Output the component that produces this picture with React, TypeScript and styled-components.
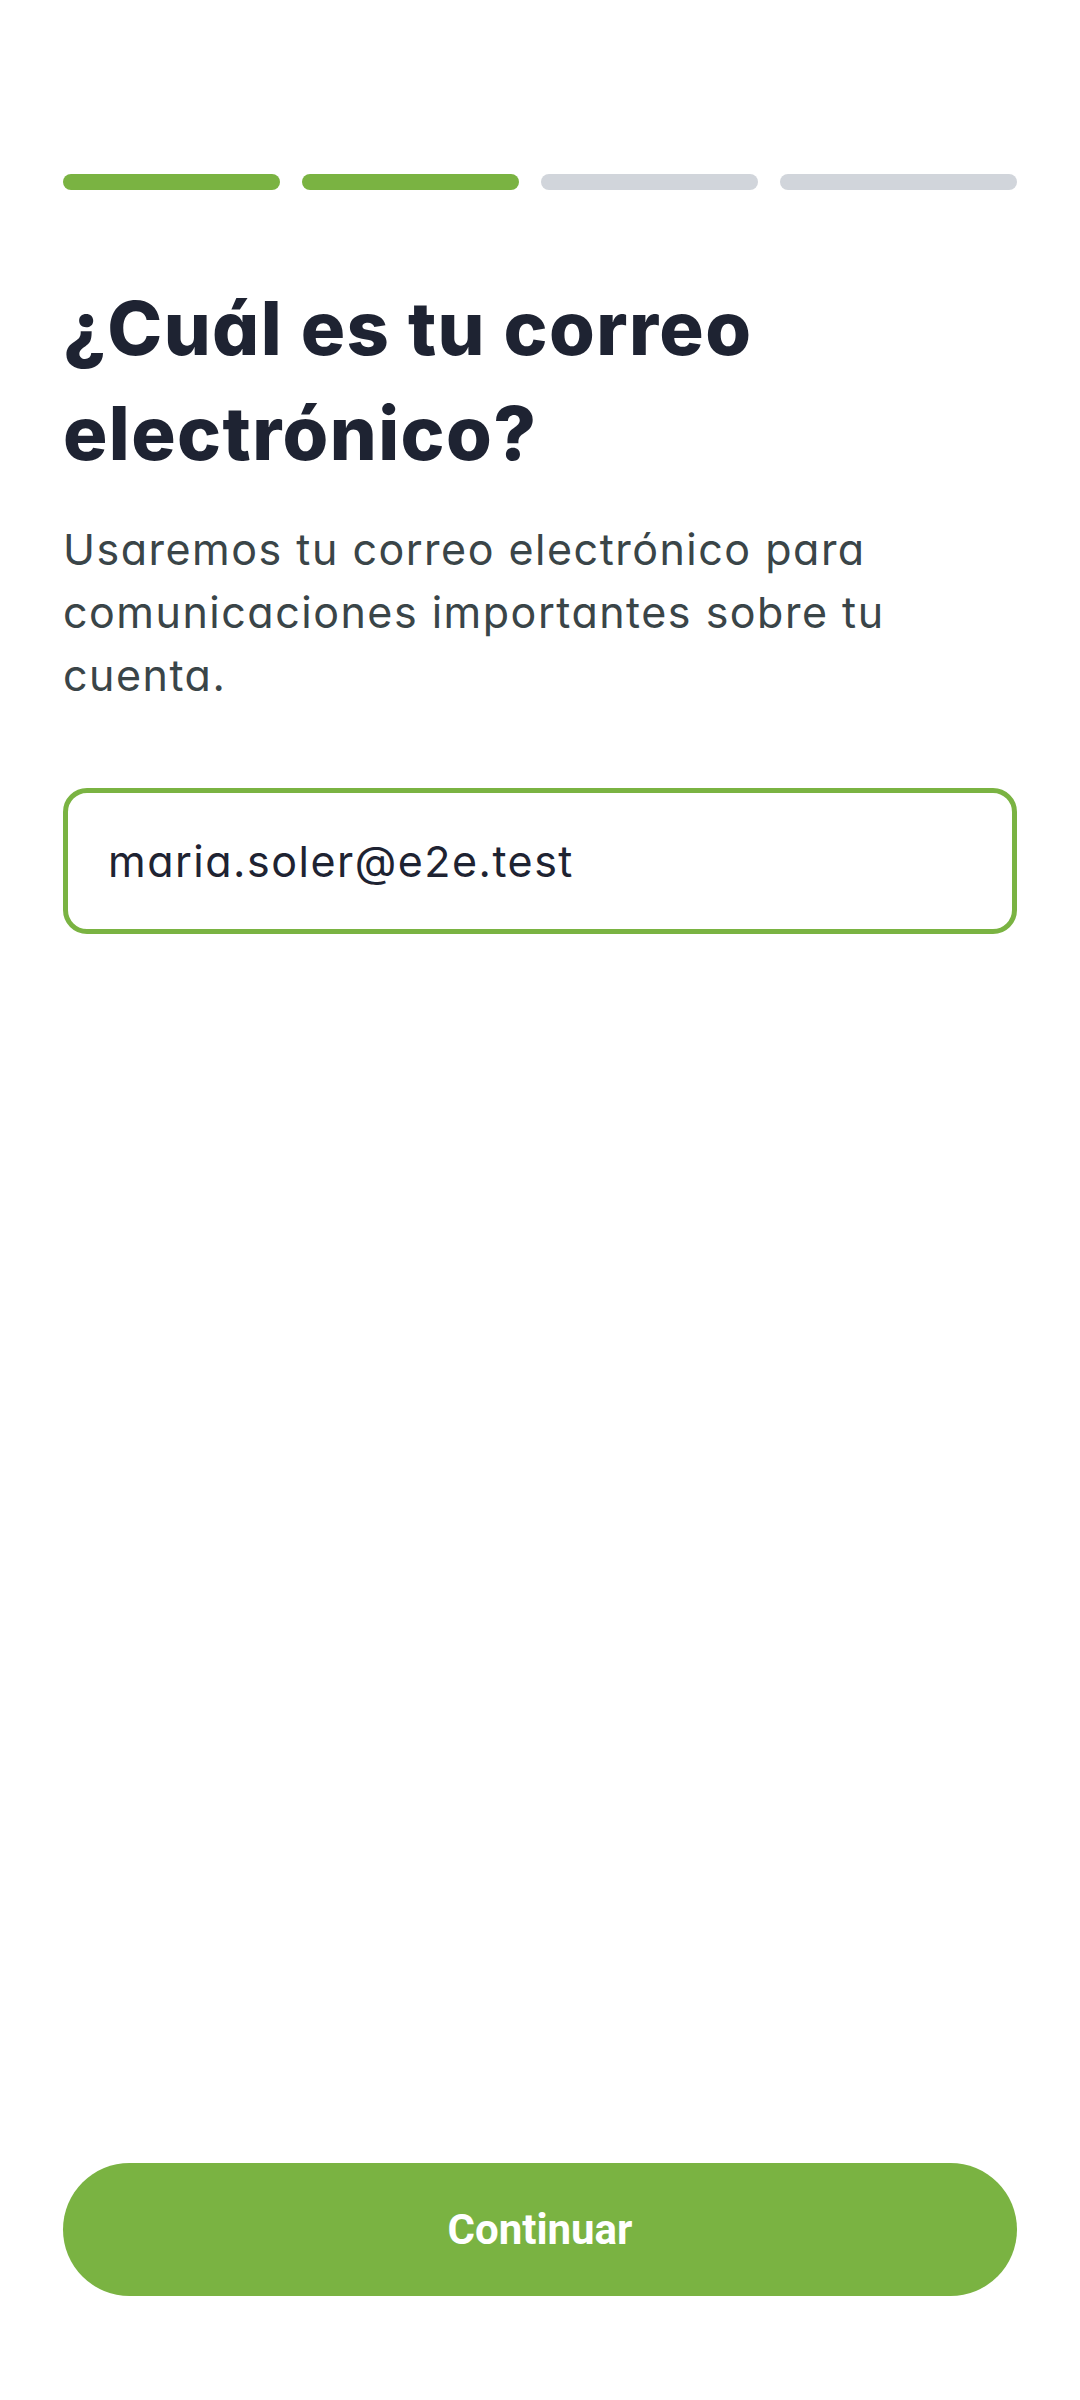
import styled, { createGlobalStyle } from 'styled-components'

const GlobalStyle = createGlobalStyle`
    * {
        box-sizing: border-box;
    }
    html, body {
        margin: 0;
        padding: 0;
        background: #FFFFFF;
    }
    #root {
        min-height: 100vh;
    }
`

const Screen = styled.main`
    min-height: 100vh;
    display: flex;
    flex-direction: column;
    padding: 174px 63px 104px;
    background: #FFFFFF;
    font-family: Inter, "Noto Sans", sans-serif;
    font-feature-settings: "cv11" 1;
`

const Steps = styled.div`
    display: grid;
    grid-template-columns: 217px 217px 217px 1fr;
    gap: 22px;
`

const Step = styled.div<{ $done?: boolean }>`
    height: 16px;
    border-radius: 8px;
    background: ${p => p.$done ? '#7AB342' : '#D1D5DB'};
`

const Title = styled.h1`
    margin: 86px 0 0;
    font-size: 74px;
    line-height: 105px;
    font-weight: 800;
    letter-spacing: 1.4px;
    color: #1E2332;
`

const Subtitle = styled.p`
    margin: 32px 0 0;
    font-size: 43px;
    line-height: 63px;
    font-weight: 400;
    letter-spacing: 1.5px;
    color: #3A4548;
`

const EmailField = styled.input`
    margin-top: 81px;
    width: 100%;
    height: 146px;
    padding: 0 40px;
    border: 5px solid #7AB342;
    border-radius: 24px;
    outline: none;
    background: #FFFFFF;
    font-family: Inter, "Noto Sans", sans-serif;
    font-feature-settings: "cv11" 1;
    font-size: 43px;
    letter-spacing: 1.5px;
    color: #1E2332;
`

const Spacer = styled.div`
    flex: 1;
`

const ContinueBtn = styled.button`
    height: 133px;
    width: 100%;
    border: none;
    border-radius: 67px;
    background: #7AB342;
    color: #FFFFFF;
    font-family: Roboto, "Liberation Sans", sans-serif;
    font-weight: 700;
    font-size: 42px;
    cursor: pointer;
`

const steps = [true, true, false, false]

export default function App() {
    return (
        <>
            <GlobalStyle />
            <Screen>
                <Steps>
                    {steps.map((done, i) => (
                        <Step key={i} $done={done} />
                    ))}
                </Steps>

                <Title>¿Cuál es tu correo electrónico?</Title>
                <Subtitle>
                    Usaremos tu correo electrónico para comunicaciones importantes sobre tu cuenta.
                </Subtitle>

                <EmailField type="email" defaultValue="maria.soler@e2e.test" />

                <Spacer />
                <ContinueBtn>Continuar</ContinueBtn>
            </Screen>
        </>
    )
}
